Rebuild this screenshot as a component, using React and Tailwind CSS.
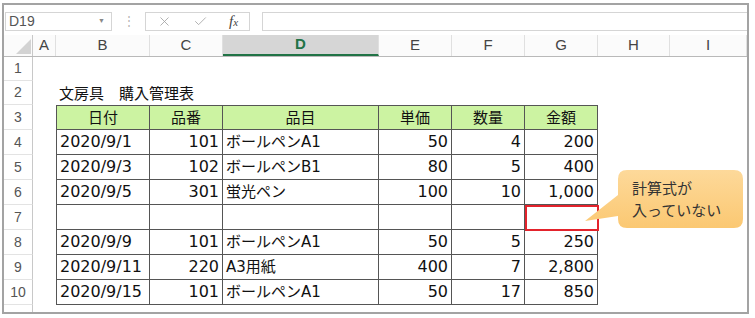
import { X, Check } from "lucide-react";

const font = { fontFamily: '"DejaVu Sans", "Noto Sans CJK JP", sans-serif' };
const jp = { fontFamily: '"Noto Sans CJK JP", "Noto Sans", sans-serif' };

const rows = [
  ["2020/9/1", "101", "ボールペンA1", "50", "4", "200"],
  ["2020/9/3", "102", "ボールペンB1", "80", "5", "400"],
  ["2020/9/5", "301", "蛍光ペン", "100", "10", "1,000"],
  ["", "", "", "", "", ""],
  ["2020/9/9", "101", "ボールペンA1", "50", "5", "250"],
  ["2020/9/11", "220", "A3用紙", "400", "7", "2,800"],
  ["2020/9/15", "101", "ボールペンA1", "50", "17", "850"],
];

const RowHead = ({ n, h }) => (
  <div
    className={`${h} w-[29px] shrink-0 border-r border-b border-r-[#c8c8c8] border-b-[#e3e3e3] flex items-center justify-center text-[14px] text-[#555] font-['Liberation_Sans',sans-serif]`}
  >
    {n}
  </div>
);

const ColHead = ({ w, label, active }) => (
  <div
    className={`${w} shrink-0 h-full border-r border-[#e0e0e0] flex items-center justify-center text-[15px] font-['Liberation_Sans',sans-serif] ${
      active ? "bg-[#d6d6d6] text-[#217346] font-bold border-b-2 border-b-[#217346]" : "text-[#444]"
    }`}
  >
    {label}
  </div>
);

function Callout() {
  return (
    <div className="absolute left-[578px] top-[164px] w-[164px] h-[62px]">
      <svg width="164" height="62" viewBox="0 0 164 62" className="absolute inset-0">
        <defs>
          <linearGradient id="cg" x1="0" y1="0" x2="0" y2="1">
            <stop offset="0" stopColor="#fdd99a" />
            <stop offset="1" stopColor="#fbc872" />
          </linearGradient>
        </defs>
        <path
          d="M45 1 H152 Q161 1 161 10 V50 Q161 59 152 59 H45 Q36 59 36 50 V47 L3 52 L36 26 V10 Q36 1 45 1 Z"
          fill="url(#cg)"
        />
      </svg>
      <div className="absolute left-[50px] top-[8px] text-[15px] leading-[22px] text-[#333]" style={jp}>
        <div>計算式が</div>
        <div>入っていない</div>
      </div>
    </div>
  );
}

export default function App() {
  const widths = ["w-[94px]", "w-[73px]", "w-[156px]", "w-[73px]", "w-[73px]", "w-[73px]"];
  const sizes = ["text-[16px]", "text-[16px]", "text-[15px]", "text-[16px]", "text-[16px]", "text-[16px]"];
  const numeric = [false, true, false, true, true, true];
  const heads = ["日付", "品番", "品目", "単価", "数量", "金額"];

  return (
    <div className="w-[755px] h-[318px] bg-white pt-[3px] pl-[2px] overflow-hidden">
      <div className="relative w-[747px] h-[311px] border-2 border-[#a3a3a3] bg-white overflow-hidden">
        {/* formula bar */}
        <div className="h-[30px] flex items-center pt-[2px]">
          <div className="ml-[1px] w-[107px] h-[19px] border border-[#d5d5d5] flex items-center justify-between pl-[3px] pr-[6px]">
            <span className="text-[14px] text-[#555] font-['Liberation_Sans',sans-serif]">D19</span>
            <span className="text-[7px] text-[#888]">▼</span>
          </div>
          <div className="w-[33px] flex justify-center text-[12px] text-[#b5b5b5] leading-none">⋮</div>
          <div className="w-[105px] h-[19px] border border-[#d5d5d5] flex items-center">
            <X size={15} strokeWidth={1.3} className="ml-[11px] text-[#a0a0a0]" />
            <Check size={15} strokeWidth={1.3} className="ml-[21px] text-[#a0a0a0]" />
            <span className="ml-[21px] text-[15px] italic text-[#444] font-['Liberation_Serif',serif]">
              f<span className="text-[11px]">x</span>
            </span>
          </div>
          <div className="ml-[12px] flex-1 h-[19px] border-y border-l border-[#d5d5d5]" />
        </div>

        {/* column headers */}
        <div className="h-[22px] flex border-b border-[#b9b9b9] bg-[#fbfbfb]">
          <div className="w-[29px] shrink-0 h-full border-r border-[#c8c8c8] flex items-end justify-end pr-[1px] pb-[2px]">
            <svg width="15" height="15" viewBox="0 0 15 15">
              <path d="M15 0 V15 H0 Z" fill="#d3d3d3" />
            </svg>
          </div>
          <ColHead w="w-[23px]" label="A" />
          <ColHead w="w-[94px]" label="B" />
          <ColHead w="w-[73px]" label="C" />
          <ColHead w="w-[156px]" label="D" active />
          <ColHead w="w-[73px]" label="E" />
          <ColHead w="w-[73px]" label="F" />
          <ColHead w="w-[73px]" label="G" />
          <ColHead w="w-[72px]" label="H" />
          <ColHead w="w-[77px]" label="I" />
        </div>

        {/* rows 1-2 */}
        <div className="flex">
          <RowHead n="1" h="h-[24px]" />
        </div>
        <div className="flex">
          <RowHead n="2" h="h-[24px]" />
          <div className="w-[23px]" />
          <div className="pl-[3px] text-[15px] text-[#111] flex items-center" style={jp}>
            文房具　購入管理表
          </div>
        </div>

        {/* header row */}
        <div className="flex">
          <RowHead n="3" h="h-[25px]" />
          <div className="w-[23px] shrink-0" />
          {heads.map((t, i) => (
            <div
              key={t}
              className={`${widths[i]} shrink-0 h-[25px] bg-[#ccf3a2] border-t border-r border-b border-[#555] ${
                i === 0 ? "border-l" : ""
              } flex items-center justify-center text-[15px] text-[#111]`}
              style={jp}
            >
              {t}
            </div>
          ))}
        </div>

        {/* data rows */}
        {rows.map((r, ri) => (
          <div key={ri} className="flex">
            <RowHead n={String(ri + 4)} h="h-[25px]" />
            <div className="w-[23px] shrink-0" />
            {r.map((c, ci) => (
              <div
                key={ci}
                className={`${widths[ci]} shrink-0 h-[25px] border-r border-b border-[#555] ${
                  ci === 0 ? "border-l" : ""
                } flex items-center px-[3px] ${sizes[ci]} text-[#111] ${
                  numeric[ci] ? "justify-end" : "justify-start"
                }`}
                style={font}
              >
                {c}
              </div>
            ))}
          </div>
        ))}
        <div className="flex">
          <RowHead n="11" h="h-[25px]" />
        </div>

        {/* red highlight on G7 */}
        <div className="absolute left-[521px] top-[200px] w-[74px] h-[26px] border-2 border-[#e3232c]" />

        <Callout />
      </div>
    </div>
  );
}
